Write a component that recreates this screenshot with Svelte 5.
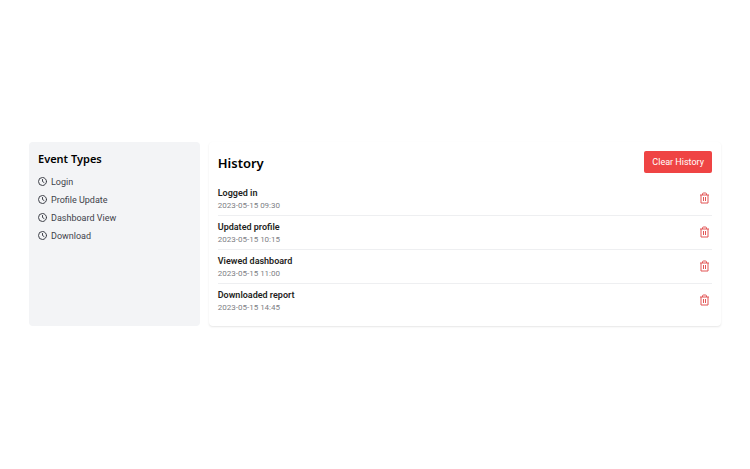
<script lang="ts">
  interface HistoryEntry {
    id: number;
    title: string;
    date: string;
  }

  const eventTypes = ['Login', 'Profile Update', 'Dashboard View', 'Download'];

  let entries = $state<HistoryEntry[]>([
    { id: 1, title: 'Logged in', date: '2023-05-15 09:30' },
    { id: 2, title: 'Updated profile', date: '2023-05-15 10:15' },
    { id: 3, title: 'Viewed dashboard', date: '2023-05-15 11:00' },
    { id: 4, title: 'Downloaded report', date: '2023-05-15 14:45' },
  ]);

  function clearHistory() { entries = []; }
  function remove(id: number) { entries = entries.filter((e) => e.id !== id); }
</script>

<div class="page">
  <div class="layout">
    <aside class="sidebar">
      <h2>Event Types</h2>
      <ul class="types">
        {#each eventTypes as type}
          <li>
            <svg width="9" height="9" viewBox="0 0 18 18" fill="none" stroke="currentColor" stroke-width="2" stroke-linecap="round" stroke-linejoin="round" aria-hidden="true">
              <circle cx="9" cy="9" r="8" />
              <path d="M9 5v4l3 2" />
            </svg>
            <span>{type}</span>
          </li>
        {/each}
      </ul>
    </aside>

    <main class="panel">
      <header class="panel-header">
        <h1>History</h1>
        <button class="clear" onclick={clearHistory}>Clear History</button>
      </header>
      <ul class="entries">
        {#each entries as entry (entry.id)}
          <li class="entry">
            <div>
              <p class="entry-title">{entry.title}</p>
              <p class="entry-date">{entry.date}</p>
            </div>
            <button class="remove" onclick={() => remove(entry.id)} aria-label="Delete {entry.title}">
              <svg width="11" height="12" viewBox="0 0 22 24" fill="none" stroke="currentColor" stroke-width="2" stroke-linejoin="round" aria-hidden="true">
                <path d="M2 6h18" />
                <path d="M4 6v16h14V6" />
                <path d="M7 6V4a2 2 0 0 1 2-2h4a2 2 0 0 1 2 2v2" />
                <path d="M9 10v8M13 10v8" />
              </svg>
            </button>
          </li>
        {/each}
      </ul>
    </main>
  </div>
</div>

<style>
  :global(body) {
    margin: 0;
    background: #fff;
  }

  .page {
    display: flex;
    align-items: center;
    min-height: 100vh;
    box-sizing: border-box;
    padding: 0 29px 2px;
    font-family: "Segoe UI", Roboto, "Noto Sans", sans-serif;
    font-size: 9px;
    line-height: 14px;
    color: #000;
  }

  .layout {
    display: grid;
    grid-template-columns: 1fr 3fr;
    gap: 9px;
    width: 100%;
  }

  h1, h2, p, ul {
    margin: 0;
    padding: 0;
  }

  h1, h2 {
    font-family: "Segoe UI", "Noto Sans", sans-serif;
    font-weight: 600;
  }

  ul {
    list-style: none;
  }

  button {
    border: none;
    font: inherit;
    cursor: pointer;
  }

  svg {
    display: block;
  }

  .sidebar {
    padding: 9px;
    border-radius: 4px;
    background: #f3f4f6;
  }

  h2 {
    margin-bottom: 8px;
    font-size: 11px;
    line-height: 16px;
  }

  .types {
    display: grid;
    gap: 4px;
  }

  .types li {
    display: flex;
    align-items: center;
    gap: 4px;
    color: #3f424a;
  }

  .panel {
    padding: 9px;
    border-radius: 4px;
    background: #fff;
    box-shadow: 0 1px 2px rgba(0, 0, 0, 0.1);
  }

  .panel-header {
    display: flex;
    align-items: end;
    justify-content: space-between;
    margin-bottom: 9px;
  }

  h1 {
    font-size: 13px;
    line-height: 20px;
  }

  .clear {
    padding: 4px 8px;
    border-radius: 2px;
    background: #ef4444;
    color: #fff;
  }

  .entry {
    display: flex;
    align-items: center;
    justify-content: space-between;
    padding: 4px 0;
    border-bottom: 1px solid #eeeff1;
  }

  .entry:last-child {
    border-bottom: none;
  }

  .entry-title {
    line-height: 14px;
    font-weight: 600;
    color: #1f1f23;
  }

  .entry-date {
    font-size: 8px;
    line-height: 11px;
    color: #7d8085;
  }

  .remove {
    padding: 2px;
    background: none;
    color: #e25555;
  }
</style>
